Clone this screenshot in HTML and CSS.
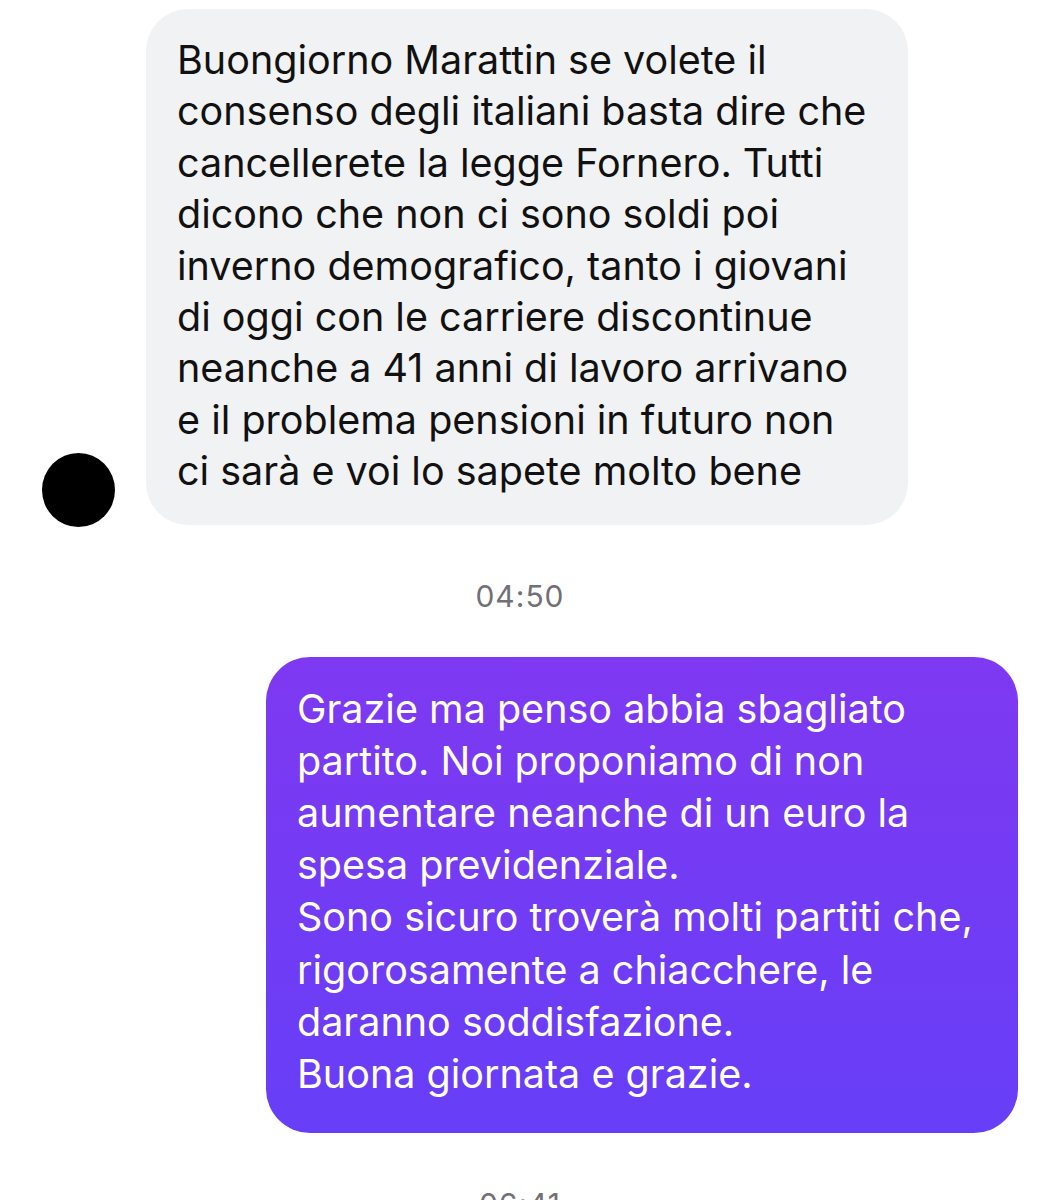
FILE: index.html
```html
<!DOCTYPE html>
<html lang="it">
<head>
    <meta charset="UTF-8">
    <meta name="viewport" content="width=device-width, initial-scale=1.0">
    <title>Messaggi</title>
    <link rel="stylesheet" href="styles.css">
</head>
<body>
    <div class="chat">
        <div class="row incoming">
            <div class="avatar"></div>
            <div class="bubble grey">Buongiorno Marattin se volete il consenso degli italiani basta dire che cancellerete la legge Fornero. Tutti dicono che non ci sono soldi poi inverno demografico, tanto i giovani di oggi con le carriere discontinue neanche a 41 anni di lavoro arrivano e il problema pensioni in futuro non ci sarà e voi lo sapete molto bene</div>
        </div>

        <div class="time">04:50</div>

        <div class="row outgoing">
            <div class="bubble purple">Grazie ma penso abbia sbagliato partito. Noi proponiamo di non aumentare neanche di un euro la spesa previdenziale.<br>Sono sicuro troverà molti partiti che, rigorosamente a chiacchere, le daranno soddisfazione.<br>Buona giornata e grazie.</div>
        </div>

        <div class="time">06:41</div>
    </div>
</body>
</html>
```

FILE: styles.css
```css
body {
    margin: 0;
    padding: 0;
    background: #fff;
    font-family: 'Inter', 'Roboto', sans-serif;
    color: #111;
    overflow: hidden;
    height: 1200px;
}
.chat {
    padding: 9px 22px 0 22px;
}
.row {
    display: flex;
}
.incoming {
    align-items: flex-end;
    gap: 31px;
    padding-left: 20px;
}
.outgoing {
    justify-content: flex-end;
}
.avatar {
    width: 73px;
    height: 74px;
    border-radius: 50%;
    background: #000;
    flex-shrink: 0;
    margin-bottom: -2px;
}
.bubble {
    font-size: 39.5px;
    line-height: 51.4px;
}
.grey {
    width: 694px;
    padding: 26px 37px 27px 31px;
    background: #f1f2f4;
    border-radius: 42px;
}
.purple {
    width: 690px;
    padding: 26px 31px 33px 31px;
    background: linear-gradient(#7e39f1, #673ef7);
    color: #fff;
    border-radius: 44px;
    line-height: 52.2px;
}
.time {
    text-align: center;
    font-size: 30px;
    letter-spacing: 1px;
    color: #707076;
    padding: 51px 0 41px 0;
    line-height: 40px;
}
```
